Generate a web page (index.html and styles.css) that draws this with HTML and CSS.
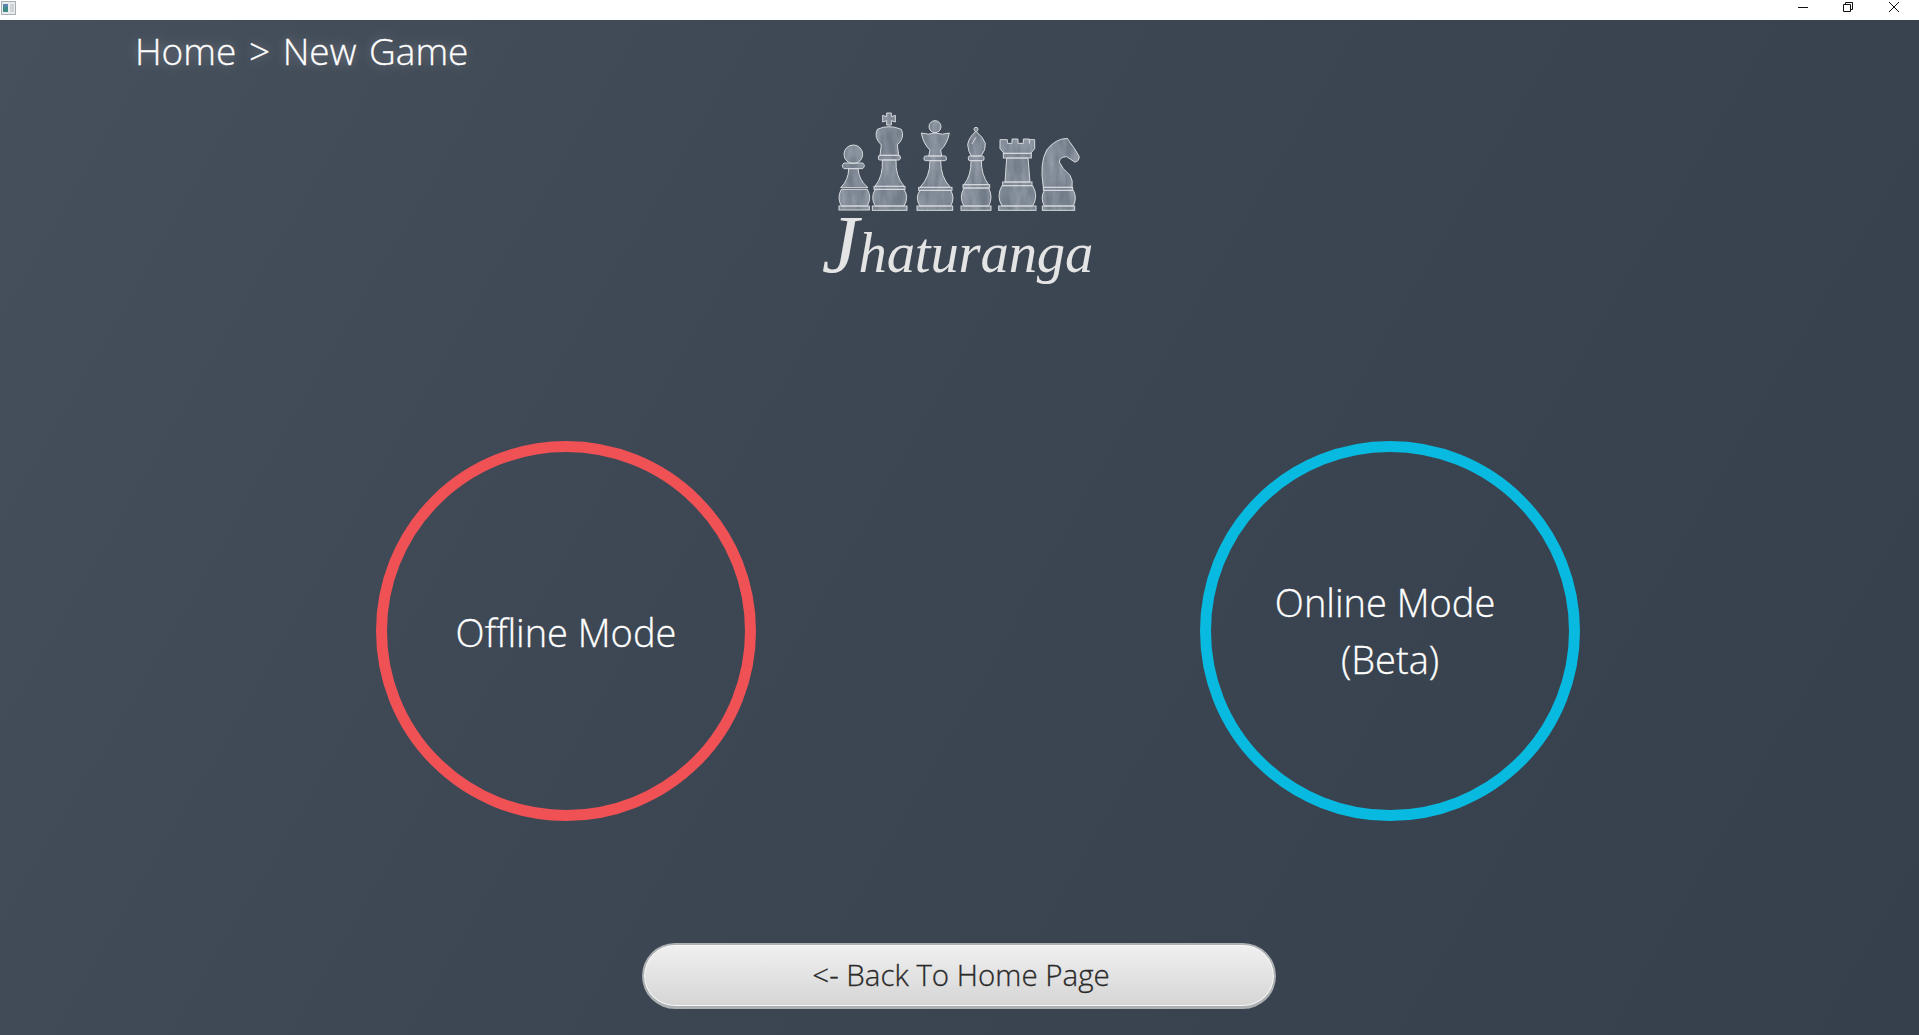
FILE: index.html
```html
<!DOCTYPE html>
<html lang="en">
<head>
<meta charset="utf-8">
<title>Jhaturanga</title>
<link rel="stylesheet" href="styles.css">
</head>
<body>
<div class="window">
  <header class="titlebar">
    <svg class="app-icon" viewBox="0 0 15 14" aria-hidden="true">
      <rect x="0.5" y="0.5" width="14" height="13" fill="#e8ecef" stroke="#a9b0b5"/>
      <rect x="2" y="3" width="5" height="8" fill="#3f8a86"/>
      <rect x="2" y="3" width="5" height="3" fill="#5b83b0"/>
      <rect x="9" y="3" width="4" height="8" fill="#cfd5d8"/>
    </svg>
    <div class="controls">
      <svg class="ctl ctl-min" viewBox="0 0 10 10" aria-hidden="true"><path d="M0 5.5H10"/></svg>
      <svg class="ctl" viewBox="0 0 10 10" aria-hidden="true"><path d="M0.5 2.5H7.5V9.5H0.5ZM2.5 2.5V0.5H9.5V7.5H7.5"/></svg>
      <svg class="ctl" viewBox="0 0 10 10" aria-hidden="true"><path d="M0 0L10 10M10 0L0 10"/></svg>
    </div>
  </header>
  <main class="stage">
    <div class="crumb">Home &gt; New Game</div>
    <svg class="logo" viewBox="0 0 1020 630" role="img" aria-label="Jhaturanga logo">
      <defs>
        <filter id="wash" x="0" y="0" width="100%" height="100%">
          <feTurbulence type="fractalNoise" baseFrequency="0.04 0.012" numOctaves="3" seed="4"/>
          <feColorMatrix values="0 0 0 0 0.33  0 0 0 0 0.37  0 0 0 0 0.43  1.3 0 0 0 -0.3"/>
          <feComposite in2="SourceGraphic" operator="in" result="t"/>
          <feMerge><feMergeNode in="SourceGraphic"/><feMergeNode in="t"/></feMerge>
        </filter>
        <g id="pieces">
          <circle cx="220" cy="163" r="28"/>
          <path d="M192 189H248Q258 197 248 206H192Q182 197 192 189Z"/>
          <path d="M206 206Q206 240 182 263H264Q236 240 234 206Z"/>
          <path d="M184 268H262Q276 292 262 318H184Q170 292 184 268Z"/>
          <rect x="177" y="318" width="91" height="12"/>
          <path d="M320 39H334V50L346 46V66L334 62V75H320V62L308 66V46L320 50Z"/>
          <path d="M292 88Q326 72 364 88Q376 112 352 135L356 166H300L304 135Q280 112 292 88Z"/>
          <rect x="295" y="166" width="66" height="14" rx="5"/>
          <path d="M307 180Q310 228 285 259H372Q346 228 348 180Z"/>
          <rect x="282" y="259" width="93" height="9"/>
          <path d="M286 268H372Q388 292 372 318H286Q270 292 286 268Z"/>
          <rect x="277" y="318" width="104" height="13"/>
          <circle cx="465" cy="80" r="18"/>
          <path d="M424 99Q445 106 465 99Q487 106 508 99Q502 132 482 150L485 168H446L450 150Q430 132 424 99Z"/>
          <rect x="432" y="168" width="67" height="14" rx="5"/>
          <path d="M450 182Q450 232 420 262H511Q482 232 482 182Z"/>
          <rect x="416" y="262" width="100" height="9"/>
          <path d="M420 271H512Q526 294 512 318H420Q404 294 420 271Z"/>
          <rect x="411" y="318" width="107" height="13"/>
          <circle cx="588" cy="88" r="6"/>
          <path d="M588 94Q566 112 563 134Q565 156 574 168H603Q618 150 616 130Q610 112 588 94Z"/>
          <rect x="565" y="168" width="47" height="14" rx="5"/>
          <path d="M573 182Q574 226 552 254H626Q604 226 604 182Z"/>
          <rect x="549" y="254" width="80" height="10"/>
          <path d="M552 264H626Q640 292 626 318H552Q536 292 552 264Z"/>
          <rect x="543" y="318" width="90" height="13"/>
          <path d="M660 119H682V130H696V117H714V130H730V117H748V130V119H764V146L752 160H672L660 146Z"/>
          <rect x="670" y="160" width="84" height="14"/>
          <path d="M680 174H744L750 246H675Z"/>
          <rect x="668" y="246" width="88" height="11"/>
          <path d="M666 257H758Q776 288 758 318H666Q648 288 666 257Z"/>
          <rect x="656" y="318" width="112" height="13"/>
          <path d="M790 262Q778 190 800 150Q826 116 862 115L868 124Q884 145 898 170Q896 186 884 186L860 170Q840 170 838 186Q846 206 870 226Q880 242 876 262Z"/>
          <rect x="790" y="262" width="88" height="9"/>
          <path d="M793 271H880Q892 294 880 318H793Q780 294 793 271Z"/>
          <rect x="787" y="318" width="97" height="13"/>
        </g>
      </defs>
      <use href="#pieces" class="piece-fill" filter="url(#wash)"/>
      <use href="#pieces" class="piece-line"/>
      <path class="piece-line" d="M588 112L576 132"/>
      <text class="wordmark" x="125" y="516" textLength="815" lengthAdjust="spacing"><tspan class="wordmark-cap">J</tspan>haturanga</text>
    </svg>
    <section class="modes">
      <div class="mode mode-offline">Offline Mode</div>
      <div class="mode mode-online"><span>Online Mode&nbsp;</span><span>(Beta)</span></div>
    </section>
    <button class="back" type="button">&lt;- Back To Home Page</button>
  </main>
</div>
</body>
</html>
```
FILE: styles.css
```css
* { box-sizing: border-box; }
html, body { margin: 0; height: 100%; overflow: hidden; }
body { font-family: "Open Sans", "Noto Sans", sans-serif; }
.window { display: flex; flex-direction: column; height: 1035px; }
.titlebar {
  flex: 0 0 20px;
  display: flex;
  align-items: flex-start;
  justify-content: space-between;
  background: #fff;
  padding: 1px 20px 0 1px;
}
.app-icon { width: 15px; height: 14px; }
.controls { display: flex; gap: 36px; padding-top: 1px; }
.ctl { width: 10px; height: 10px; fill: none; stroke: #111; stroke-width: 1; overflow: visible; }
.ctl-min { margin-right: -1px; }
.stage {
  flex: 1;
  display: flex;
  flex-direction: column;
  align-items: flex-start;
  background: linear-gradient(120deg, #46505c 0%, #3d4753 42%, #35404c 100%);
  color: #fff;
}
.crumb {
  margin: 6px 0 0 135px;
  font-size: 37px;
  font-weight: 300;
  word-spacing: 3px;
  line-height: 50px;
  color: #fff;
  text-shadow: 0 0 12px rgba(255, 255, 255, 0.35);
  -webkit-text-stroke: 0.3px #fff;
}
.logo { display: block; width: 340px; height: 210px; margin: 24px 0 0 780px; }
.piece-fill { fill: #717c88; }
.piece-line { fill: none; stroke: #d6d9dd; stroke-width: 3; }
.wordmark {
  font-family: "Liberation Serif", serif;
  font-style: italic;
  font-size: 170px;
  fill: #e4e4e4;
}
.wordmark-cap { font-size: 250px; }
.modes { display: flex; gap: 444px; margin: 131px 0 0 376px; }
.mode {
  width: 380px;
  height: 380px;
  border-radius: 50%;
  border: 11px solid;
  display: flex;
  flex-direction: column;
  align-items: center;
  justify-content: center;
  font-size: 38px;
  font-weight: 300;
  line-height: 57px;
  color: #fff;
  -webkit-text-stroke: 0.3px #fff;
}
.mode-offline { border-color: #ef5155; padding-top: 2px; }
.mode-online { border-color: #08b9e0; }
.back {
  width: 634px;
  height: 66px;
  margin: 122px 0 0 642px;
  border-radius: 33px;
  border: 2px solid #aeb1b4;
  border-bottom-width: 3px;
  box-shadow: inset 0 0 0 1px #f7f7f7;
  background: linear-gradient(#f0f0f0, #d5d5d5);
  font-family: "Open Sans", "Noto Sans", sans-serif;
  font-size: 29.5px;
  font-weight: 300;
  color: #2a2a2a;
  -webkit-text-stroke: 0.3px #2a2a2a;
  padding: 0 0 2px 4px;
}
```
